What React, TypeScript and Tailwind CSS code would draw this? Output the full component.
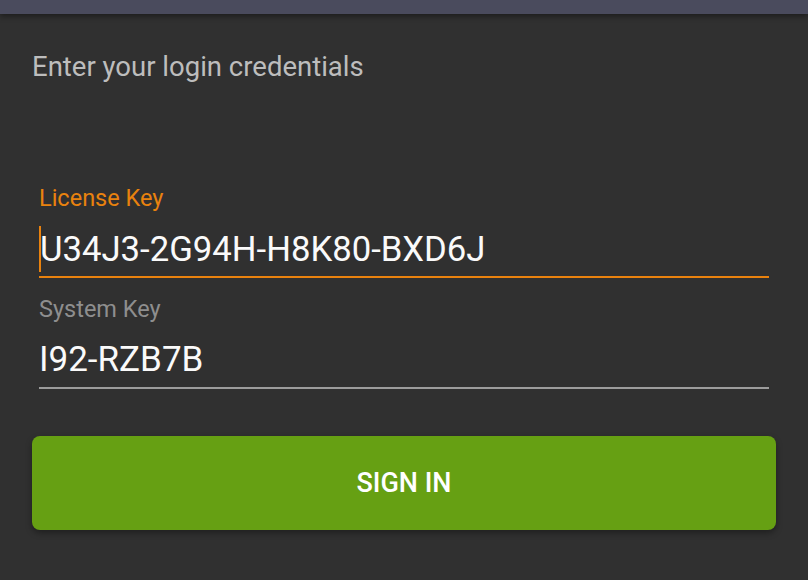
import React from 'react';

export default function App() {
  return (
    <div className="min-h-[580px] w-full bg-[#303030] font-['Roboto',sans-serif]">
      <div className="relative z-10 h-[14px] bg-[#4a4b5d] shadow-[0_2px_6px_rgba(0,0,0,0.45)]" />

      <div className="px-[32px] pt-[37px]">
        <h1 className="text-[27.5px] leading-[32px] text-[#bdbdbd]">Enter your login credentials</h1>

        <div className="mt-[101px] px-[7px]">
          <label className="block text-[23.5px] leading-[28px] text-[#e9820e]">License Key</label>
          <div className="flex pt-[14px] pb-[4px] border-b-2 border-[#e9820e]">
            <span className="w-[2px] h-[46px] bg-[#e9820e]" />
            <span className="ml-[-1px] text-[34.7px] leading-[46px] text-[#fafafa]">U34J3-2G94H-H8K80-BXD6J</span>
          </div>

          <label className="mt-[17px] block text-[23.5px] leading-[28px] text-[#8e8e8e]">System Key</label>
          <div className="pt-[14px] pb-[4px] border-b-2 border-[#9c9c9c]">
            <span className="block text-[35px] leading-[46px] text-[#fafafa]">I92-RZB7B</span>
          </div>
        </div>

        <button className="mt-[47px] flex h-[94px] w-full items-center justify-center rounded-[8px] bg-[#66a013] text-[27px] font-medium text-white shadow-[0_3px_6px_rgba(0,0,0,0.35)]">
          SIGN IN
        </button>
      </div>
    </div>
  );
}
